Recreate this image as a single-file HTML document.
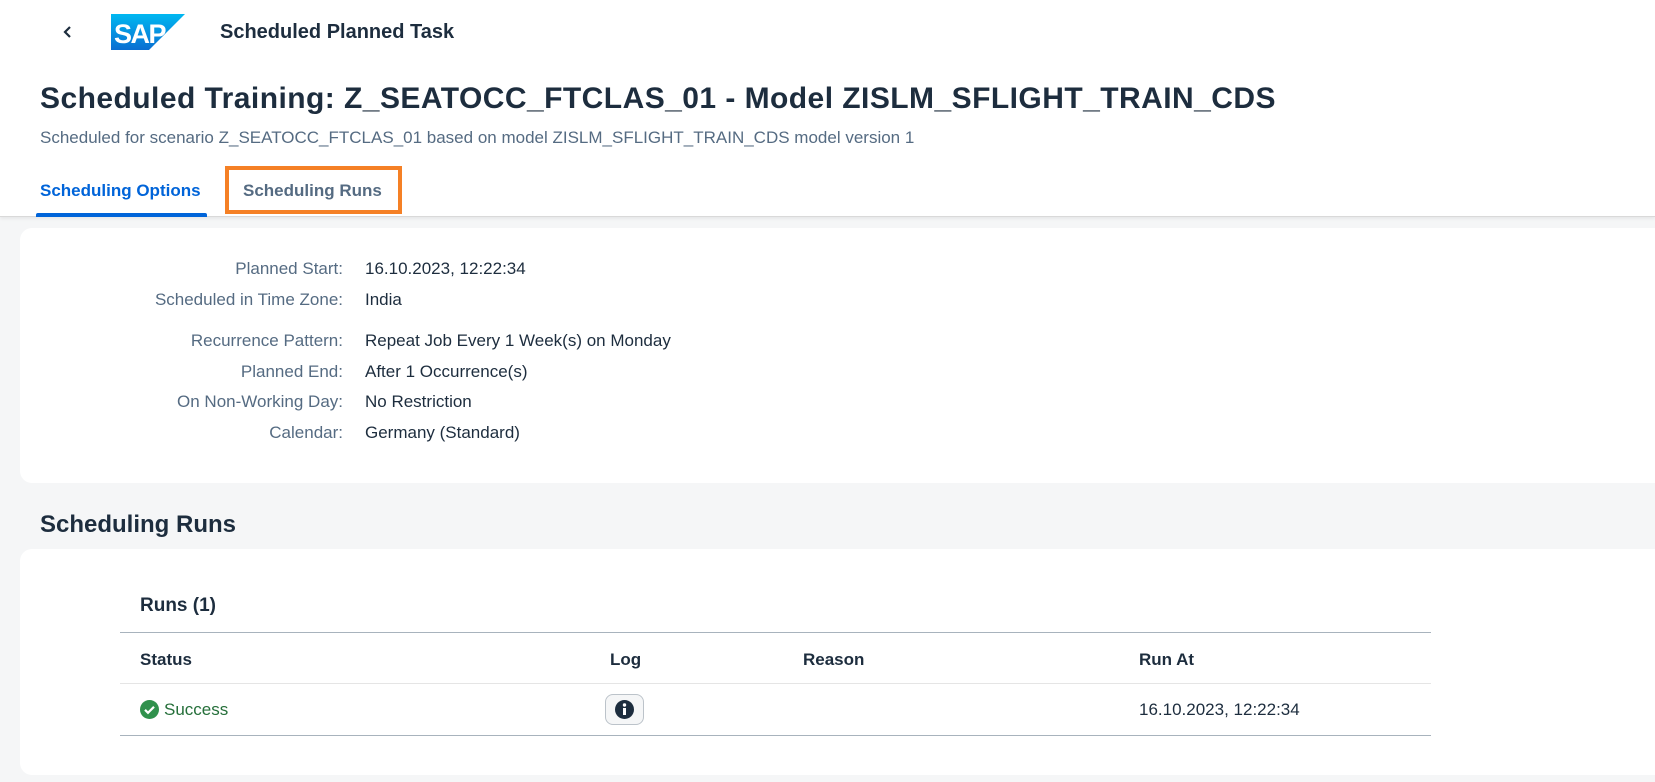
<!DOCTYPE html>
<html><head><meta charset="utf-8"><style>
*{margin:0;padding:0;box-sizing:border-box}
body{width:1655px;height:782px;overflow:hidden;background:#f5f6f7;font-family:"Liberation Sans",sans-serif;color:#1d2d3e;position:relative}
.a{position:absolute;white-space:nowrap}
.hdr{position:absolute;left:0;top:0;width:1655px;height:217px;background:#fff;border-bottom:1px solid #d9d9d9;box-shadow:0 2px 3px rgba(0,0,0,.06)}
.card{position:absolute;background:#fff;border-radius:12px}
.lbl{position:absolute;right:1312px;color:#556b82;font-size:17px;white-space:nowrap}
.val{position:absolute;left:365px;font-size:17px;white-space:nowrap;color:#1d2d3e}
.line{position:absolute;left:120px;width:1311px;height:1px}
.th{position:absolute;top:650px;font-size:17px;font-weight:bold}
</style></head><body>
<div class="hdr"></div>
<svg class="a" style="left:62px;top:25px" width="12" height="14" viewBox="0 0 12 14"><path d="M8 2L3 7l5 5" stroke="#1d2d3e" stroke-width="2.2" fill="none"/></svg>
<svg class="a" style="left:111px;top:14px" width="74" height="36" viewBox="0 0 74 36"><defs><linearGradient id="g" x1="0" y1="0" x2="0" y2="1"><stop offset="0" stop-color="#00b8f1"/><stop offset="1" stop-color="#0a6ed1"/></linearGradient></defs><path d="M0 0H74L38 36H0Z" fill="url(#g)"/><text x="3" y="29" font-family="Liberation Sans" font-weight="bold" font-size="27" fill="#fff" letter-spacing="-1.5">SAP</text></svg>
<div class="a" style="left:220px;top:21px;font-size:20px;font-weight:bold">Scheduled Planned Task</div>
<div class="a" style="left:40px;top:82px;font-size:30px;font-weight:bold;letter-spacing:0.45px">Scheduled Training: Z_SEATOCC_FTCLAS_01 - Model ZISLM_SFLIGHT_TRAIN_CDS</div>
<div class="a" style="left:40px;top:128px;font-size:17px;color:#556b82">Scheduled for scenario Z_SEATOCC_FTCLAS_01 based on model ZISLM_SFLIGHT_TRAIN_CDS model version 1</div>
<div class="a" style="left:40px;top:181px;font-size:17px;font-weight:bold;color:#0064d9">Scheduling Options</div>
<div class="a" style="left:36px;top:213px;width:171px;height:4px;background:#0064d9;border-radius:2px 2px 0 0"></div>
<div class="a" style="left:225px;top:166px;width:177px;height:48px;border:4px solid #f58025"></div>
<div class="a" style="left:243px;top:181px;font-size:17px;font-weight:bold;color:#556b82">Scheduling Runs</div>

<div class="card" style="left:20px;top:228px;width:1650px;height:255px"></div>
<div class="lbl" style="top:259px">Planned Start:</div><div class="val" style="top:259px">16.10.2023, 12:22:34</div>
<div class="lbl" style="top:290px">Scheduled in Time Zone:</div><div class="val" style="top:290px">India</div>
<div class="lbl" style="top:331px">Recurrence Pattern:</div><div class="val" style="top:331px">Repeat Job Every 1 Week(s) on Monday</div>
<div class="lbl" style="top:362px">Planned End:</div><div class="val" style="top:362px">After 1 Occurrence(s)</div>
<div class="lbl" style="top:392px">On Non-Working Day:</div><div class="val" style="top:392px">No Restriction</div>
<div class="lbl" style="top:423px">Calendar:</div><div class="val" style="top:423px">Germany (Standard)</div>

<div class="a" style="left:40px;top:511px;font-size:24px;font-weight:bold">Scheduling Runs</div>
<div class="card" style="left:20px;top:549px;width:1650px;height:226px"></div>
<div class="a" style="left:140px;top:595px;font-size:19px;font-weight:bold">Runs (1)</div>
<div class="line" style="top:632px;background:#a8b3bd"></div>
<div class="th" style="left:140px">Status</div>
<div class="th" style="left:610px">Log</div>
<div class="th" style="left:803px">Reason</div>
<div class="th" style="left:1139px">Run At</div>
<div class="line" style="top:683px;background:#e5e5e5"></div>
<svg class="a" style="left:140px;top:700px" width="19" height="19" viewBox="0 0 19 19"><circle cx="9.5" cy="9.5" r="9.5" fill="#30914c"/><path d="M5 9.8l3 3 6-6" stroke="#fff" stroke-width="2.2" fill="none"/></svg>
<div class="a" style="left:164px;top:700px;font-size:17px;color:#256f3a">Success</div>
<div class="a" style="left:605px;top:694px;width:39px;height:31px;border:1px solid #bcc3ca;border-radius:8px;background:#f5f6f7"></div>
<svg class="a" style="left:615px;top:700px" width="19" height="19" viewBox="0 0 19 19"><circle cx="9.5" cy="9.5" r="9.5" fill="#1d2d3e"/><rect x="8" y="8" width="3" height="7" fill="#fff"/><circle cx="9.5" cy="5" r="1.7" fill="#fff"/></svg>
<div class="a" style="left:1139px;top:700px;font-size:17px">16.10.2023, 12:22:34</div>
<div class="line" style="top:735px;background:#a8b3bd"></div>
</body></html>
